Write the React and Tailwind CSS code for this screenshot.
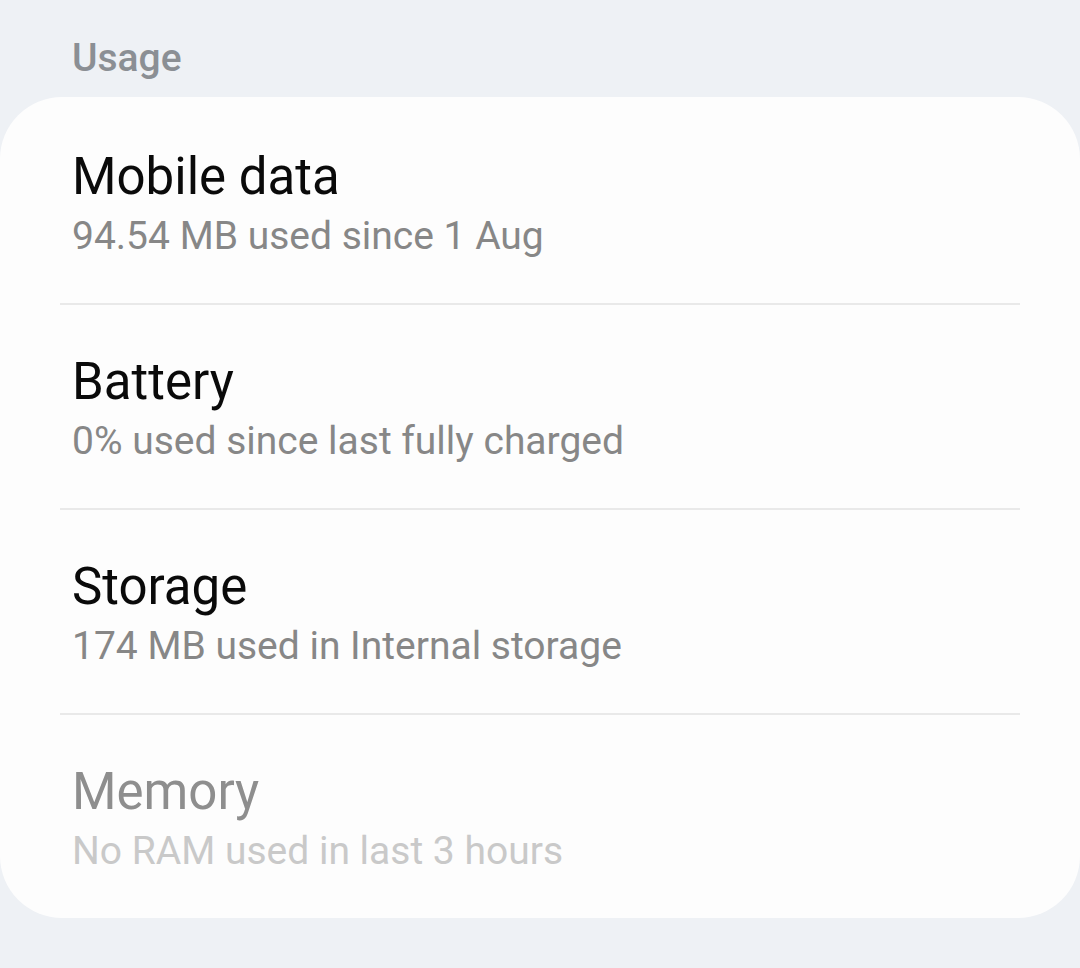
import React from "react";

const rows = [
  { title: "Mobile data", sub: "94.54 MB used since 1 Aug" },
  { title: "Battery", sub: "0% used since last fully charged" },
  { title: "Storage", sub: "174 MB used in Internal storage" },
  { title: "Memory", sub: "No RAM used in last 3 hours", disabled: true },
];

export default function App() {
  return (
    <div
      className="min-h-screen w-full bg-[#eef1f5]"
      style={{ fontFamily: "Roboto, 'Noto Sans', sans-serif" }}
    >
      <div className="h-[97px] pl-[72px] pt-[35px]">
        <div className="text-[39px] leading-[46px] font-medium text-[#8b8f94]">Usage</div>
      </div>
      <div className="w-full rounded-[62px] bg-[#fdfdfd]">
        {rows.map((r, i) => (
          <div key={r.title}>
            {i > 0 && <div className="mx-[60px] h-[2px] bg-[#e9e9e9]" />}
            <div className={"pl-[72px] pb-[44px] " + (i === 0 ? "pt-[50px]" : "pt-[47px]")}>
              <div
                className={
                  "text-[51px] leading-[60px] " +
                  (r.disabled ? "text-[#8e8e8e]" : "text-[#0a0a0a]")
                }
              >
                {r.title}
              </div>
              <div
                className={
                  "mt-[6px] text-[39px] leading-[46px] " +
                  (r.disabled ? "text-[#c9c9c9]" : "text-[#878787]")
                }
              >
                {r.sub}
              </div>
            </div>
          </div>
        ))}
      </div>
    </div>
  );
}
